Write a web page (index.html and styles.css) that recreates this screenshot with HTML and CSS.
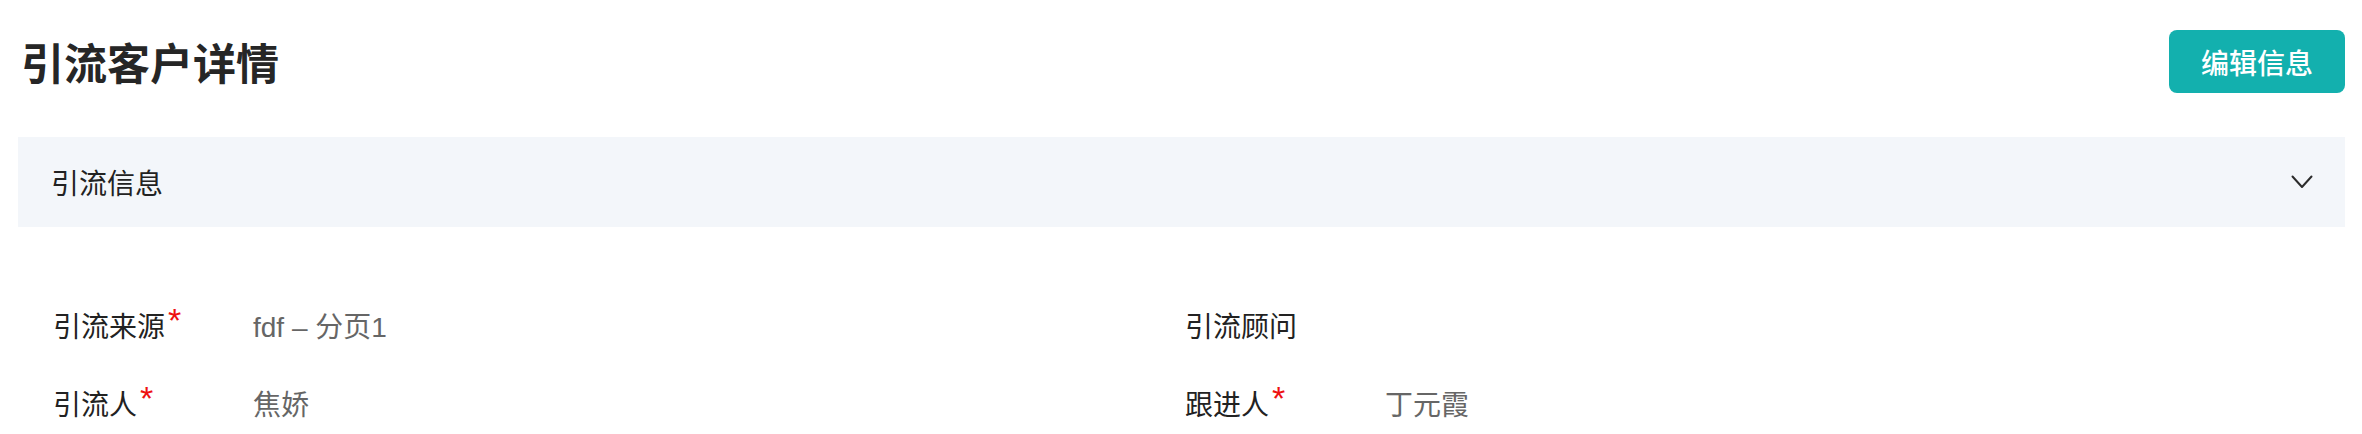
FILE: index.html
```html
<!DOCTYPE html>
<html lang="zh-CN">
<head>
<meta charset="utf-8">
<title>引流客户详情</title>
<link rel="stylesheet" href="styles.css">
</head>
<body>
<div class="page">
  <header class="header">
    <h1 class="title">引流客户详情</h1>
    <button class="btn-edit" type="button">编辑信息</button>
  </header>
  <section class="panel">
    <div class="panel-head">
      <span class="panel-title">引流信息</span>
      <svg class="chevron" width="22" height="14" viewBox="0 0 22 14" aria-hidden="true">
        <path d="M1.5 1.5 L11 12 L20.5 1.5" fill="none" stroke="#2b2b2b" stroke-width="2" stroke-linecap="round" stroke-linejoin="round"/>
      </svg>
    </div>
    <div class="fields">
      <div class="field">
        <span class="label">引流来源<span class="req">*</span></span>
        <span class="value">fdf – 分页1</span>
      </div>
      <div class="field">
        <span class="label">引流顾问</span>
        <span class="value"></span>
      </div>
      <div class="field">
        <span class="label">引流人<span class="req">*</span></span>
        <span class="value">焦娇</span>
      </div>
      <div class="field">
        <span class="label">跟进人<span class="req">*</span></span>
        <span class="value">丁元霞</span>
      </div>
    </div>
  </section>
</div>
</body>
</html>
```

FILE: styles.css
```css
* { box-sizing: border-box; }
html, body { margin: 0; padding: 0; background: #ffffff; }
body {
  font-family: "Liberation Sans", "Noto Sans CJK SC", sans-serif;
  color: #222222;
}
.page {
  padding: 0 17px 0 18px;
}
.header {
  display: flex;
  align-items: center;
  justify-content: space-between;
  padding-top: 30px;
  margin-bottom: 44px;
}
.title {
  margin: 0 0 0 3px;
  font-family: "Noto Sans CJK SC", sans-serif;
  font-size: 43px;
  font-weight: 700;
  line-height: 63px;
  color: #262626;
}
.btn-edit {
  height: 63px;
  width: 176px;
  border: none;
  border-radius: 8px;
  background: #13b0ae;
  color: #ffffff;
  font-family: "Noto Sans CJK SC", sans-serif;
  font-size: 28px;
  font-weight: 500;
  padding: 0;
}
.panel-head {
  height: 90px;
  background: #f3f6fa;
  display: flex;
  align-items: center;
  justify-content: space-between;
  padding: 0 32px 0 33px;
}
.panel-title {
  font-family: "Noto Sans CJK SC", sans-serif;
  font-size: 28px;
  line-height: 40px;
  color: #222222;
}
.chevron { display: block; }
.fields {
  display: grid;
  grid-template-columns: 1132px 1fr;
  padding: 59px 28px 0 35px;
}
.field {
  display: flex;
  align-items: center;
  height: 78px;
  font-size: 28px;
  line-height: 40px;
}
.label {
  width: 200px;
  flex: none;
  color: #222222;
  font-family: "Noto Sans CJK SC", sans-serif;
}
.req {
  font-family: "Liberation Sans", sans-serif;
  font-size: 34px;
  color: #ee1111;
  margin-left: 3px;
  position: relative;
  top: -5px;
}
.value {
  color: #666666;
  position: relative;
  top: 3px;
}
```
